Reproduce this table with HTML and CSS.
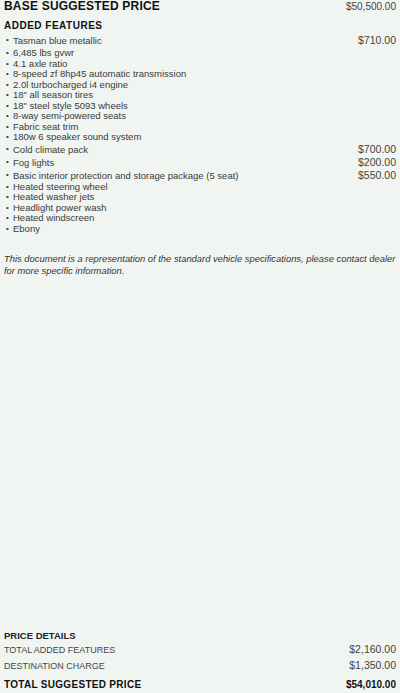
FILE: index.html
```html
<!DOCTYPE html>
<html>
<head>
<meta charset="utf-8">
<title>Price sheet</title>
<link rel="stylesheet" href="styles.css">
</head>
<body>
<div class="sheet">
  <div class="row base">
    <span class="title">BASE SUGGESTED PRICE</span>
    <span class="amt">$50,500.00</span>
  </div>
  <h2 class="sub">ADDED FEATURES</h2>
  <ul class="features">
    <li class="priced first"><span>Tasman blue metallic</span><span class="amt">$710.00</span></li>
    <li>6,485 lbs gvwr</li>
    <li>4.1 axle ratio</li>
    <li>8-speed zf 8hp45 automatic transmission</li>
    <li>2.0l turbocharged i4 engine</li>
    <li>18" all season tires</li>
    <li>18" steel style 5093 wheels</li>
    <li>8-way semi-powered seats</li>
    <li>Fabric seat trim</li>
    <li>180w 6 speaker sound system</li>
    <li class="priced"><span>Cold climate pack</span><span class="amt">$700.00</span></li>
    <li class="priced"><span>Fog lights</span><span class="amt">$200.00</span></li>
    <li class="priced"><span>Basic interior protection and storage package (5 seat)</span><span class="amt">$550.00</span></li>
    <li>Heated steering wheel</li>
    <li>Heated washer jets</li>
    <li>Headlight power wash</li>
    <li>Heated windscreen</li>
    <li>Ebony</li>
  </ul>
  <p class="note">This document is a representation of the standard vehicle specifications, please contact dealer for more specific information.</p>

  <div class="summary">
    <h3 class="sum_tit">PRICE DETAILS</h3>
    <div class="row line"><span>TOTAL ADDED FEATURES</span><span class="amt">$2,160.00</span></div>
    <div class="row line"><span>DESTINATION CHARGE</span><span class="amt">$1,350.00</span></div>
    <div class="row total"><span>TOTAL SUGGESTED PRICE</span><span class="amt">$54,010.00</span></div>
  </div>
</div>
</body>
</html>
```

FILE: styles.css
```css
* { margin:0; padding:0;}
html,body{ background:#f1f5f2;}
body{ font:normal 10px/1.05 "Liberation Sans", Arial, sans-serif; color:#3a3a3a;}
ul,li{ list-style:none;}

.sheet{ display:flex; flex-direction:column; height:693px; padding:0 4px 0 4px; box-sizing:border-box;}
.row{ display:flex; justify-content:space-between; align-items:baseline;}
.amt{ font-size:10.5px; color:#444;}

.base{ height:14px; line-height:13px;}
.base .title{ font-weight:bold; font-size:12px; letter-spacing:0.2px; color:#111;}
.base .amt{ font-size:10px;}

.sub{ margin-top:6px; font-size:10px; line-height:12px; font-weight:bold; letter-spacing:0.5px; color:#111;}

.features{ margin-top:1px;}
.features li{ position:relative; padding-left:9px; font-size:9.5px; line-height:10.5px;}
.features li:before{ content:"\2022"; position:absolute; left:2px; top:0; font-size:8px;}
.features .priced{ display:flex; justify-content:space-between; align-items:baseline; line-height:12px;}
.features .first{ line-height:14px;}

.note{ margin-top:19px; font-size:9.4px; line-height:12px; font-style:italic; color:#333;}

.summary{ margin-top:auto; padding-bottom:1px;}
.sum_tit{ font-size:9.5px; line-height:12px; font-weight:bold; color:#222;}
.summary .line{ font-size:9px; line-height:16px; color:#444;}
.summary .line:first-of-type{ line-height:14px;}
.summary .total{ margin-top:4px; font-size:10px; line-height:14px; font-weight:bold; color:#111; letter-spacing:0.3px;}
.summary .total .amt{ font-size:10px; letter-spacing:0; color:#111;}
```
